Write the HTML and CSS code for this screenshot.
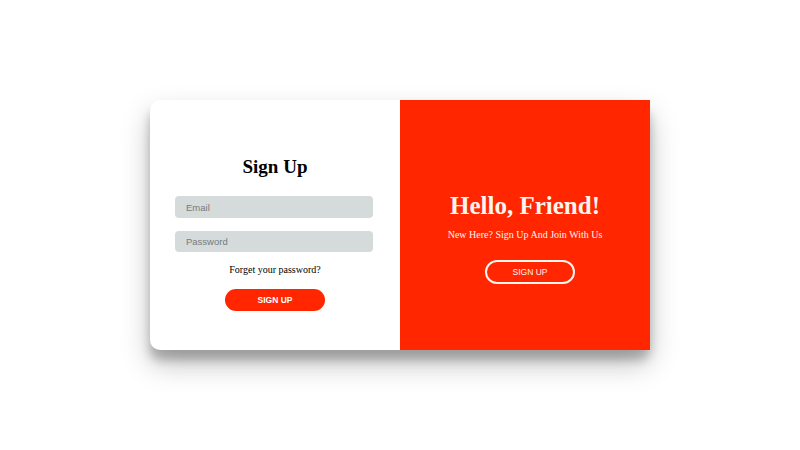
FILE: index.html
```html
<!DOCTYPE html>
<html lang="en">
<head>
<meta charset="utf-8">
<title>Sign Up</title>
<link rel="stylesheet" href="styles.css">
</head>
<body>
<main class="page">
  <section class="card">
    <form class="panel form-panel">
      <h1 class="title">Sign Up</h1>
      <input class="field" type="email" placeholder="Email">
      <input class="field field-pass" type="password" placeholder="Password">
      <a class="forgot" href="#">Forget your password?</a>
      <button class="btn btn-solid" type="button">SIGN UP</button>
    </form>
    <div class="panel overlay-panel">
      <h1 class="hello">Hello, Friend!</h1>
      <p class="sub">New Here? Sign Up And Join With Us</p>
      <button class="btn btn-ghost" type="button">SIGN UP</button>
    </div>
  </section>
</main>
</body>
</html>
```
FILE: styles.css
```css
* { box-sizing: border-box; }
html, body { margin: 0; padding: 0; background: #fff; }
.page {
  width: 800px;
  height: 450px;
  display: flex;
  align-items: center;
  justify-content: center;
}
.card {
  width: 500px;
  height: 250px;
  display: flex;
  background: #fff;
  border-radius: 10px;
  box-shadow: 0 14px 28px rgba(0,0,0,0.25), 0 10px 10px rgba(0,0,0,0.22);
}
.panel {
  width: 250px;
  height: 250px;
  display: flex;
  flex-direction: column;
  align-items: center;
  margin: 0;
}
.form-panel {
  padding: 55px 25px 0 25px;
}
.title {
  margin: 0;
  font-family: "Liberation Serif", serif;
  font-weight: bold;
  font-size: 19px;
  line-height: 24px;
  color: #000;
}
.field {
  align-self: flex-start;
  width: 198px;
  height: 22px;
  margin-top: 17px;
  border: none;
  border-radius: 4px;
  background: #d5dadb;
  padding: 0 11px;
  font-family: "Liberation Sans", sans-serif;
  font-size: 9.5px;
  color: #333;
  outline: none;
}
.field::placeholder { color: #767b7d; }
.field-pass { margin-top: 13px; height: 21px; }
.forgot {
  margin-top: 11px;
  font-family: "Liberation Serif", serif;
  font-size: 10px;
  line-height: 14px;
  color: #000;
  text-decoration: none;
}
.btn {
  font-family: "Liberation Sans", sans-serif;
  font-size: 8.5px;
  border-radius: 20px;
  cursor: pointer;
  padding: 0;
}
.btn-solid {
  margin-top: 12px;
  width: 100px;
  height: 22px;
  background: #ff2600;
  color: #fff;
  font-weight: bold;
  border: none;
}
.overlay-panel {
  background: #ff2600;
  padding-top: 91px;
  color: #fdf5ee;
}
.hello {
  margin: 0;
  font-family: "Liberation Serif", serif;
  font-weight: bold;
  font-size: 25px;
  line-height: 30px;
}
.sub {
  margin: 7px 0 0;
  font-family: "Liberation Serif", serif;
  font-size: 10px;
  line-height: 14px;
}
.btn-ghost {
  margin: 18px 0 0 10px;
  width: 90px;
  height: 24px;
  background: transparent;
  border: 2px solid #fdf5ee;
  color: #fdf5ee;
}
```
